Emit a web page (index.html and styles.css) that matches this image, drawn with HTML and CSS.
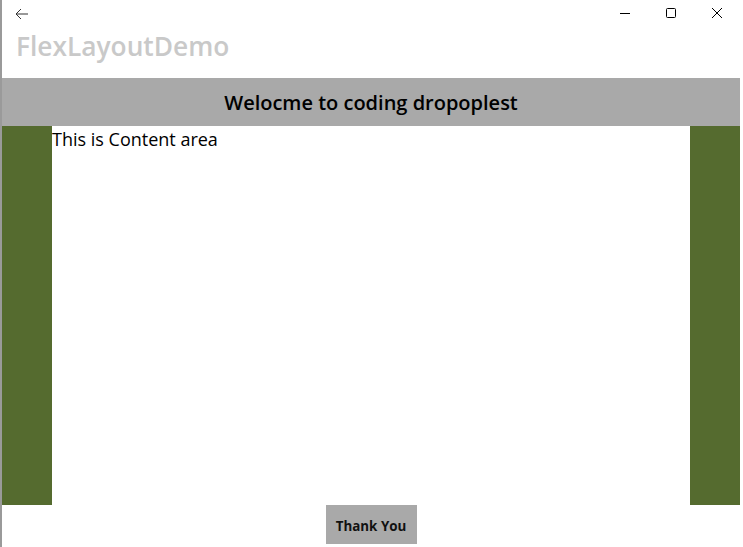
FILE: index.html
```html
<!DOCTYPE html>
<html>
<head>
<meta charset="utf-8">
<link rel="stylesheet" href="styles.css">
</head>
<body>
<div class="window">
  <div class="titlebar">
    <div class="titlerow">
      <svg class="back" width="14" height="12" viewBox="0 0 14 12"><path d="M6 1 L1 6 L6 11 M1 6 H13" fill="none" stroke="#333" stroke-width="1"/></svg>
      <div class="controls">
        <svg width="46" height="28" viewBox="0 0 46 28"><path d="M18 13.5 H28" stroke="#000" stroke-width="1"/></svg>
        <svg width="46" height="28" viewBox="0 0 46 28"><rect x="18.5" y="8.5" width="9" height="9" rx="1" fill="none" stroke="#000" stroke-width="1"/></svg>
        <svg width="46" height="28" viewBox="0 0 46 28"><path d="M18 8 L28 18 M28 8 L18 18" stroke="#000" stroke-width="1"/></svg>
      </div>
    </div>
    <div class="apptitle">FlexLayoutDemo</div>
  </div>
  <div class="page">
    <div class="header">Welocme to coding dropoplest</div>
    <div class="middle">
      <div class="side"></div>
      <div class="content">This is Content area</div>
      <div class="side"></div>
    </div>
    <div class="footer"><div class="btn">Thank You</div></div>
  </div>
</div>
</body>
</html>
```
FILE: styles.css
```css
html, body {
  margin: 0;
  padding: 0;
  background: #fff;
}
.window {
  width: 743px;
  height: 547px;
  box-sizing: border-box;
  border-left: 2px solid #9a9a9a;
  display: flex;
  flex-direction: column;
  font-family: "Open Sans", "Noto Sans", sans-serif;
}
.titlebar {
  height: 78px;
  display: flex;
  flex-direction: column;
}
.titlerow {
  display: flex;
  justify-content: space-between;
  align-items: flex-start;
  height: 28px;
}
.back {
  margin: 8px 0 0 13px;
}
.controls {
  display: flex;
  margin-right: 3px;
}
.apptitle {
  margin: 0 0 0 14px;
  font-size: 26.3px;
  font-weight: 600;
  color: #c9c9c9;
  letter-spacing: 0;
  line-height: 36px;
}
.page {
  width: 738px;
  display: flex;
  flex-direction: column;
  flex: 1;
}
.header {
  height: 48px;
  background: #a9a9a9;
  display: flex;
  align-items: center;
  justify-content: center;
  font-size: 20px;
  font-weight: 600;
  color: #000;
}
.middle {
  height: 379px;
  display: flex;
}
.side {
  width: 50px;
  background: #556b2f;
}
.content {
  flex: 1;
  font-size: 18px;
  line-height: 26px;
  color: #000;
}
.footer {
  display: flex;
  justify-content: center;
}
.btn {
  width: 91px;
  height: 39px;
  box-sizing: border-box;
  padding-top: 3px;
  background: #a9a9a9;
  display: flex;
  align-items: center;
  justify-content: center;
  font-size: 13.4px;
  font-weight: 700;
  color: #111;
}
```
